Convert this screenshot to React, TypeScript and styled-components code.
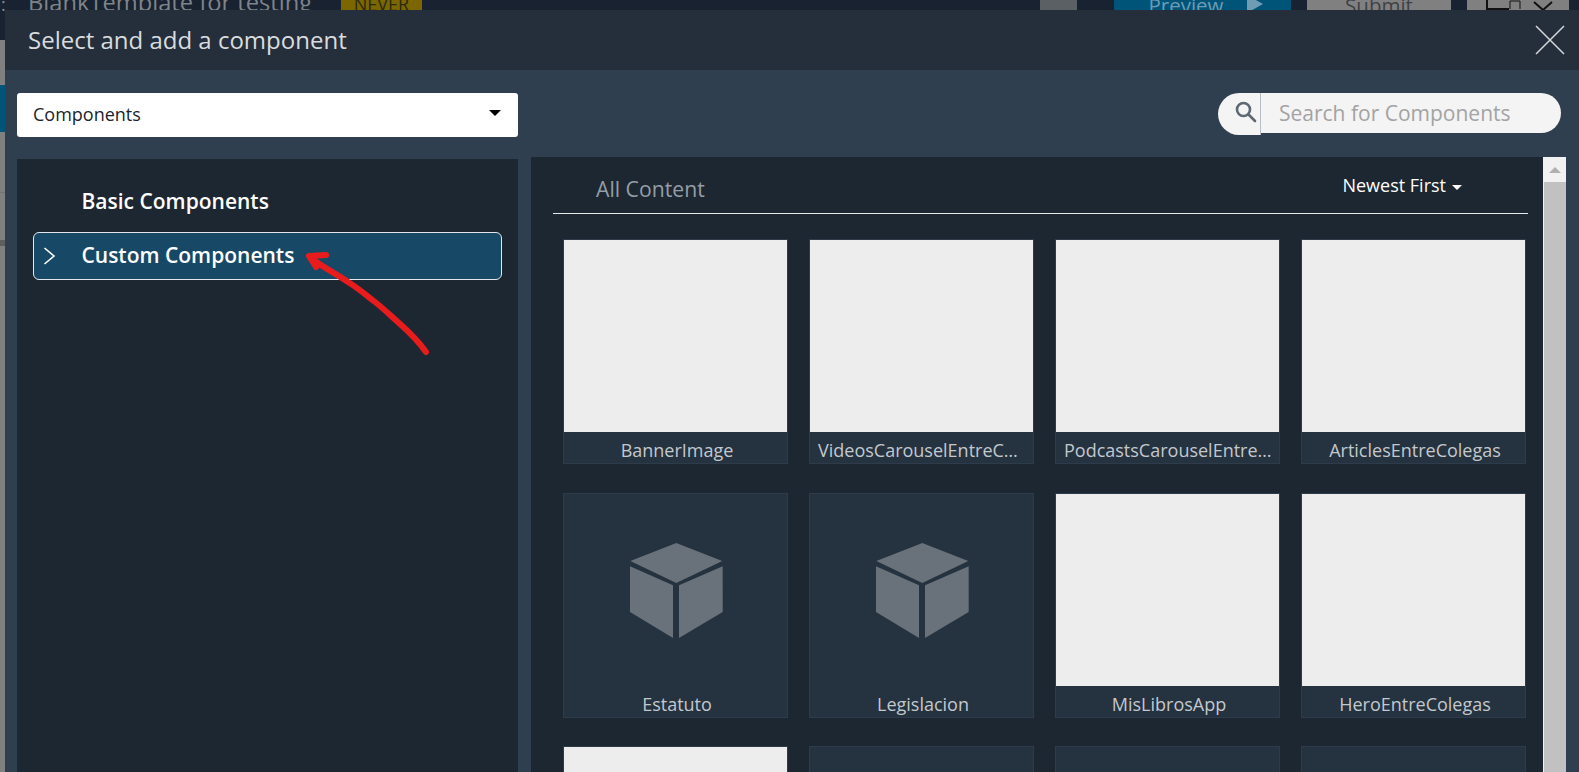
import React from "react";
import styled, { createGlobalStyle } from "styled-components";

const Global = createGlobalStyle`
  html, body { margin: 0; padding: 0; height: 100%; overflow: hidden; background: #808080; }
  * { box-sizing: border-box; }
  body { font-family: "Open Sans", "Liberation Sans", sans-serif; }
`;

const Page = styled.div`
  position: relative;
  width: 1579px;
  height: 772px;
  overflow: hidden;
  display: flex;
  flex-direction: column;
`;

const TopBar = styled.div`
  height: 40px;
  flex: none;
  background: #182230;
  display: flex;
  align-items: flex-start;
  padding-right: 10px;
`;

const Dots = styled.span`
  width: 28px;
  margin-top: -8px;
  padding-left: 1px;
  font-size: 18px;
  line-height: 24px;
  color: #8a8a8a;
`;

const BgTitle = styled.span`
  width: 313px;
  margin-top: -13px;
  font-size: 23.7px;
  line-height: 30px;
  color: #7e8489;
  white-space: nowrap;
`;

const NeverBadge = styled.span`
  width: 81px;
  height: 40px;
  margin-top: -15px;
  background: #7b6600;
  color: #2b2a10;
  font-size: 18px;
  line-height: 38px;
  text-align: center;
`;

const BarActions = styled.div`
  margin-left: auto;
  display: flex;
  align-items: flex-start;
`;

const BarButton = styled.div<{ $w: number; $bg: string; $ml: number }>`
  width: ${(p) => p.$w}px;
  margin-left: ${(p) => p.$ml}px;
  height: 40px;
  margin-top: -10px;
  background: ${(p) => p.$bg};
  display: flex;
  align-items: flex-start;
  justify-content: center;
  gap: 23px;
  font-size: 20.5px;
  line-height: 24px;
  color: #3e4245;
`;

const SubmitLabel = styled.span`
  margin-top: 3px;
`;

const PreviewLabel = styled.span`
  color: #6d9cb4;
  font-size: 20.5px;
  line-height: 24px;
  margin: 3px 0 0 6px;
`;

const PlayIcon = styled.svg`
  margin-top: 5px;
`;

const Strip = styled.div`
  flex: 1;
  display: flex;
  flex-direction: column;
  width: 5px;
`;

const StripBlock = styled.div<{ $h?: number; $bg: string }>`
  background: ${(p) => p.$bg};
  ${(p) => (p.$h ? `height: ${p.$h}px; flex: none;` : "flex: 1;")}
`;

const Modal = styled.div`
  position: absolute;
  left: 5px;
  top: 10px;
  right: 0;
  bottom: 0;
  background: #303f50;
  display: flex;
  flex-direction: column;
  overflow: hidden;
`;

const ModalHeader = styled.div`
  height: 60px;
  flex: none;
  background: #252f3b;
  display: flex;
  align-items: center;
  justify-content: space-between;
  padding: 0 14px 0 23px;
`;

const ModalTitle = styled.h1`
  margin: -2px 0 0;
  font-size: 24px;
  font-weight: 400;
  color: #d9dcdf;
`;

const Toolbar = styled.div`
  height: 87px;
  flex: none;
  display: flex;
  justify-content: space-between;
  align-items: flex-start;
  padding: 23px 18px 0 12px;
`;

const SelectBox = styled.div`
  width: 501px;
  height: 44px;
  background: #fff;
  border-radius: 3px;
  display: flex;
  align-items: center;
  justify-content: space-between;
  padding: 0 17px 3px 16px;
  font-size: 18px;
  color: #1a2430;
`;

const SelectCaret = styled.span`
  width: 0;
  height: 0;
  margin-top: -2px;
  border-left: 6px solid transparent;
  border-right: 6px solid transparent;
  border-top: 6px solid #000;
`;

const SearchWrap = styled.div`
  display: flex;
  align-items: flex-start;
`;

const SearchIconBox = styled.div`
  width: 43px;
  height: 42px;
  background: #f4f4f4;
  border-right: 1px solid #b9bfc6;
  border-radius: 21px 0 0 21px;
  display: flex;
  align-items: center;
  justify-content: flex-end;
  padding: 0 2px 4px 0;
`;

const SearchInput = styled.input`
  width: 300px;
  height: 40px;
  border: 0;
  outline: 0;
  background: #f4f4f4;
  border-radius: 0 20px 20px 0;
  padding: 0 0 0 18px;
  font-family: inherit;
  font-size: 21px;
  color: #333;
  &::placeholder { color: #a3a3a3; opacity: 1; }
`;

const Body = styled.div`
  flex: 1;
  display: flex;
  align-items: flex-start;
  padding-left: 12px;
  min-height: 0;
`;

const LeftPanel = styled.nav`
  width: 501px;
  height: 640px;
  flex: none;
  margin-top: 2px;
  background: #1d2731;
  padding: 19px 16px 0;
  display: flex;
  flex-direction: column;
  gap: 6px;
`;

const NavItem = styled.div<{ $active?: boolean }>`
  height: 48px;
  flex: none;
  display: flex;
  align-items: center;
  border-radius: 6px;
  border: 1px solid ${(p) => (p.$active ? "#e3e8ec" : "transparent")};
  background: ${(p) => (p.$active ? "#174966" : "transparent")};
  color: #fff;
  font-size: 21px;
  font-weight: 600;
  position: relative;
  padding: 0 0 3px 47.5px;
`;

const NavChevron = styled.svg`
  position: absolute;
  left: 9px;
  top: 14px;
`;

const ContentPanel = styled.section`
  width: 1012px;
  height: 640px;
  flex: none;
  margin-left: 13px;
  background: #1d2731;
  padding: 0 15px 0 22px;
`;

const ContentHead = styled.div`
  height: 57px;
  border-bottom: 1px solid #e6e8ea;
  display: flex;
  justify-content: space-between;
  padding: 17px 66px 0 43px;
`;

const AllContent = styled.span`
  font-size: 21.2px;
  line-height: 30px;
  color: #949ea8;
`;

const SortBy = styled.span`
  display: flex;
  align-items: center;
  gap: 6px;
  height: 24px;
  margin-top: -1px;
  color: #fff;
  font-size: 18px;
`;

const SortCaret = styled.span`
  width: 0;
  height: 0;
  margin-top: 4px;
  border-left: 5.5px solid transparent;
  border-right: 5.5px solid transparent;
  border-top: 5.5px solid #fff;
`;

const CardGrid = styled.div`
  display: grid;
  grid-template-columns: repeat(4, 225px);
  column-gap: 21px;
  row-gap: 28.5px;
  padding: 25px 0 0 10px;
`;

const Card = styled.div`
  height: 225px;
  background: #25323f;
  border: 1px solid #2e3b4b;
  display: flex;
  flex-direction: column;
`;

const Thumb = styled.div<{ $blank?: boolean }>`
  height: 192px;
  flex: none;
  background: ${(p) => (p.$blank ? "#ededed" : "transparent")};
  display: flex;
  justify-content: center;
  padding: 49px 0 0 1px;
`;

const CardLabel = styled.div`
  flex: 1;
  min-height: 0;
  padding: 3px 5px 0 8px;
  font-size: 18px;
  line-height: 30px;
  color: #c3c8cd;
  text-align: center;
  white-space: nowrap;
  overflow: hidden;
  text-overflow: ellipsis;
`;

const Scrollbar = styled.div`
  width: 23px;
  height: 640px;
  flex: none;
  background: #f1f1f1;
  display: flex;
  flex-direction: column;
`;

const ScrollUp = styled.div`
  height: 25px;
  flex: none;
  display: flex;
  justify-content: center;
  padding-top: 10px;
  &::before {
    content: "";
    width: 0;
    height: 0;
    border-left: 6px solid transparent;
    border-right: 6px solid transparent;
    border-bottom: 6px solid #b0b0b0;
  }
`;

const ScrollThumb = styled.div`
  flex: 1;
  margin-left: 1px;
  background: #c1c1c1;
`;

const Annotation = styled.svg`
  position: absolute;
  left: 290px;
  top: 235px;
  pointer-events: none;
`;

const CubeIcon = () => (
  <svg width="93" height="96" viewBox="0 0 93 96" fill="#69717a">
    <path d="M46.3 0 92.3 18 46.3 40 .3 18Z" />
    <path d="M0 23.3 43 42.3V95L0 69Z" />
    <path d="M49 42.3 92.7 23.3V69L49 95Z" />
  </svg>
);

const cards = [
  { name: "BannerImage", blank: true },
  { name: "VideosCarouselEntreColegas", blank: true },
  { name: "PodcastsCarouselEntreColegas", blank: true },
  { name: "ArticlesEntreColegas", blank: true },
  { name: "Estatuto", cube: true },
  { name: "Legislacion", cube: true },
  { name: "MisLibrosApp", blank: true },
  { name: "HeroEntreColegas", blank: true },
  { name: "", blank: true },
  { name: "" },
  { name: "" },
  { name: "" },
];

export default function App() {
  return (
    <Page>
      <Global />
      <TopBar>
        <Dots>:</Dots>
        <BgTitle>BlankTemplate for testing</BgTitle>
        <NeverBadge>NEVER</NeverBadge>
        <BarActions>
          <BarButton $w={37} $ml={0} $bg="#5b6064" />
          <BarButton $w={177} $ml={37} $bg="#005478">
            <PreviewLabel>Preview</PreviewLabel>
            <PlayIcon width="16" height="18" viewBox="0 0 16 18" fill="#6d9cb4">
              <path d="M0 0 16 9 0 18Z" />
            </PlayIcon>
          </BarButton>
          <BarButton $w={144} $ml={16} $bg="#808080">
            <SubmitLabel>Submit</SubmitLabel>
          </BarButton>
          <BarButton $w={102} $ml={16} $bg="#808080">
            <svg width="102" height="20" viewBox="0 0 102 20" fill="none" stroke="#111" strokeWidth="2">
              <path d="M20 1V19H42" />
              <path d="M43 19V11H53V19" strokeWidth="1" />
              <path d="M67 12 76 20 85 12" strokeWidth="2" />
            </svg>
          </BarButton>
        </BarActions>
      </TopBar>
      <Strip>
        <StripBlock $h={45} $bg="#808080" />
        <StripBlock $h={47} $bg="#005478" />
        <StripBlock $h={60} $bg="#808080" />
        <StripBlock $h={1} $bg="#737373" />
        <StripBlock $h={47} $bg="#808080" />
        <StripBlock $h={6} $bg="#5f5f5f" />
        <StripBlock $bg="#808080" />
      </Strip>
      <Modal>
        <ModalHeader>
          <ModalTitle>Select and add a component</ModalTitle>
          <svg width="30" height="30" viewBox="0 0 30 30" stroke="#d4d8dc" strokeWidth="1.5" fill="none">
            <path d="M1 1 29 29M29 1 1 29" />
          </svg>
        </ModalHeader>
        <Toolbar>
          <SelectBox>
            Components
            <SelectCaret />
          </SelectBox>
          <SearchWrap>
            <SearchIconBox>
              <svg width="24" height="24" viewBox="0 0 24 24" fill="none" stroke="#5e6772" strokeWidth="2.6">
                <circle cx="9.5" cy="9.5" r="6.5" />
                <path d="M14.5 14.5 21 21" strokeLinecap="round" />
              </svg>
            </SearchIconBox>
            <SearchInput placeholder="Search for Components" readOnly />
          </SearchWrap>
        </Toolbar>
        <Body>
          <LeftPanel>
            <NavItem>Basic Components</NavItem>
            <NavItem $active>
              <NavChevron width="13" height="18" viewBox="0 0 13 18" fill="none" stroke="#fff" strokeWidth="1.6">
                <path d="M1.5 1 11 9 1.5 17" />
              </NavChevron>
              Custom Components
            </NavItem>
          </LeftPanel>
          <ContentPanel>
            <ContentHead>
              <AllContent>All Content</AllContent>
              <SortBy>
                Newest First
                <SortCaret />
              </SortBy>
            </ContentHead>
            <CardGrid>
              {cards.map((c, i) => (
                <Card key={i}>
                  <Thumb $blank={c.blank}>{c.cube && <CubeIcon />}</Thumb>
                  <CardLabel>{c.name}</CardLabel>
                </Card>
              ))}
            </CardGrid>
          </ContentPanel>
          <Scrollbar>
            <ScrollUp />
            <ScrollThumb />
          </Scrollbar>
        </Body>
        <Annotation width="150" height="125" viewBox="295 245 150 125" fill="none" stroke="#e81c1c" strokeLinecap="round" strokeLinejoin="round">
          <path d="M426 352C417 339 408 331 399 323C391 316 384 309 375 302C366 295 358 288 348 282C338 275 326 269 312 259" strokeWidth="6" />
          <path d="M326 255 309 256 316 267" strokeWidth="6" />
        </Annotation>
      </Modal>
    </Page>
  );
}
